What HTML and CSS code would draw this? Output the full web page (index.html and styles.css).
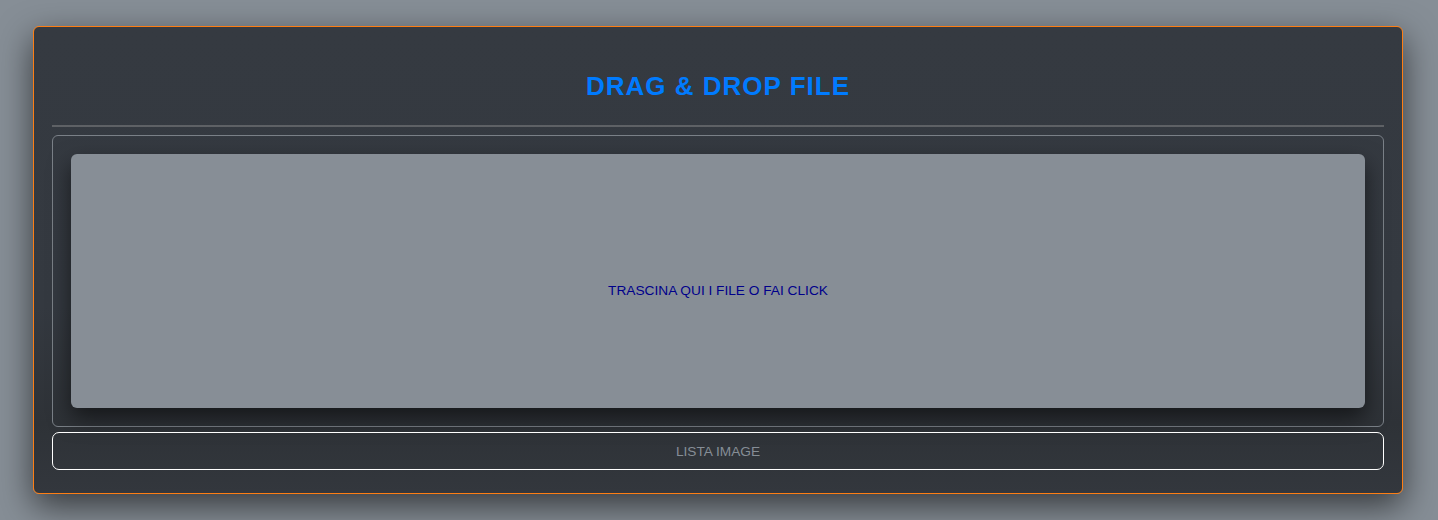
FILE: index.html
```html
<!DOCTYPE html>
<html lang="it">
<head>
<meta charset="utf-8">
<title>Drag & Drop File</title>
<link rel="stylesheet" href="styles.css">
</head>
<body>
<main class="card">
  <h1 class="title">DRAG &amp; DROP FILE</h1>
  <hr class="divider">
  <section class="drop-outer">
    <div class="drop-zone">TRASCINA QUI I FILE O FAI CLICK</div>
  </section>
  <button class="list-btn" type="button">LISTA IMAGE</button>
</main>
</body>
</html>
```
FILE: styles.css
```css
html, body {
  margin: 0;
  padding: 0;
}
body {
  background: #868e96;
  font-family: "Liberation Sans", Arial, sans-serif;
  min-height: 520px;
  padding-top: 26px;
  box-sizing: border-box;
}
.card {
  width: 1370px;
  margin: 0 0 0 33px;
  box-sizing: border-box;
  background: linear-gradient(180deg, #353a41 0%, #343940 60%, #2e3237 85%, #33373d 100%);
  border: 1px solid #fd7e14;
  border-radius: 6px;
  padding: 44px 18px 23px;
  box-shadow: 0 12px 34px rgba(0, 0, 0, 0.6);
  display: flex;
  flex-direction: column;
}
.title {
  margin: 0;
  text-align: center;
  color: #007bff;
  font-size: 26px;
  line-height: 30px;
  font-weight: bold;
  letter-spacing: 1px;
}
.divider {
  margin: 24px 0 8px;
  border: 0;
  height: 2px;
  background: #5e6165;
}
.drop-outer {
  border: 1px solid #7a8087;
  border-radius: 6px;
  padding: 18px;
}
.drop-zone {
  height: 254px;
  background: #878e96;
  border-radius: 6px;
  box-shadow: 0 10px 22px rgba(0, 0, 0, 0.55);
  display: flex;
  align-items: center;
  justify-content: center;
  color: #00008b;
  font-size: 13.7px;
  padding-top: 18px;
  box-sizing: border-box;
}
.list-btn {
  margin-top: 5px;
  height: 38px;
  background: transparent;
  border: 1px solid #ffffff;
  border-radius: 7px;
  color: #868e96;
  font-family: "Liberation Sans", Arial, sans-serif;
  font-size: 13.7px;
  padding: 0;
}
```
